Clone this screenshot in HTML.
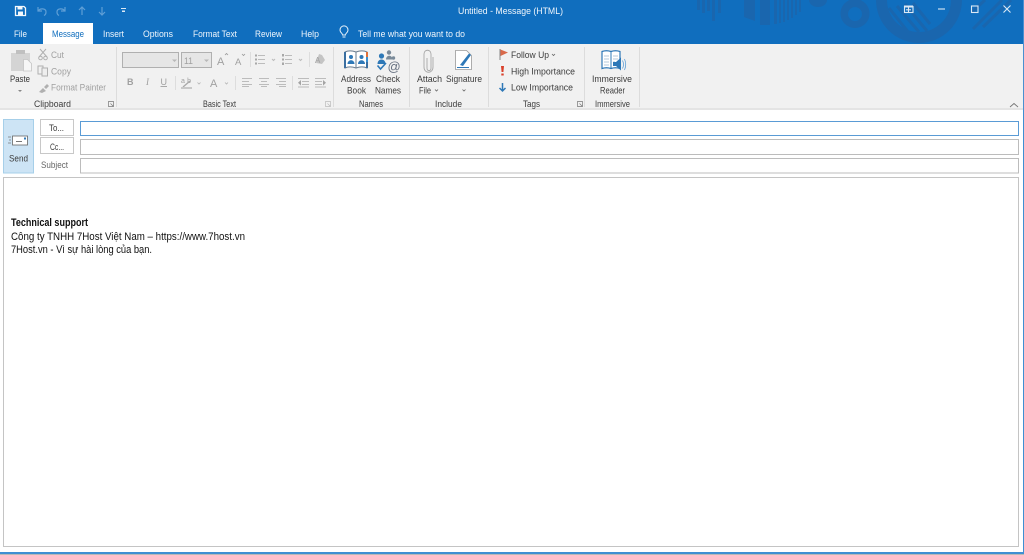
<!DOCTYPE html>
<html><head><meta charset="utf-8"><style>
html,body{margin:0;padding:0;background:#fff;width:1024px;height:555px;overflow:hidden}
svg{display:block;position:absolute;left:0;top:0;filter:blur(.35px)}
text{font-family:"Liberation Sans",sans-serif;font-size:9.6px;fill:#3c3c3c}
.w{fill:#f0f6fc}.d{fill:#a0a0a0}.b{fill:#111;font-size:10.6px}
</style></head><body>
<svg width="1024" height="555" viewBox="0 0 1024 555" xmlns="http://www.w3.org/2000/svg">
<rect width="1024" height="555" fill="#fff"/>
<rect width="1024" height="44" fill="#106ebe"/>
<!-- title pattern -->
<g fill="#1a66ae">
<rect x="697" y="0" width="3" height="10"/><rect x="702" y="0" width="3" height="13"/><rect x="707" y="0" width="3" height="11"/><rect x="712" y="0" width="3" height="21"/><rect x="718" y="0" width="3" height="13"/>
<path d="M744 0h11v21l-11-4z"/><rect x="760" y="0" width="10" height="25"/>
<path d="M774 0h3v24h-3zM779 0h2v23h-2zM783 0h2v22h-2zM787 0h2v20h-2zM791 0h2v18h-2zM795 0h2v15h-2zM799 0h2v12h-2z"/>
<path d="M809 0a9 7 0 0 0 18 0z"/>
<path fill-rule="evenodd" d="M855 -1a14.500 14.500 0 1 0 .01 0zM855 7a7 7 0 1 1-.01 0z"/>
<path fill-rule="evenodd" d="M876 0a43 43 0 0 0 86 0h-11a32 32 0 0 1-64 0z"/>
</g>
<g stroke="#1a66ae" stroke-width="3" fill="none">
<path d="M889 8l20 25M897 6l22 26M905 4l22 27M913 3l17 21"/>
<path d="M1002 0l-29 29M1011 0l-28 27M985 0l-13 12"/>
</g>
<!-- qat -->
<path d="M15.500 6.500h8.500l1.500 1.500v7.500h-10z" fill="none" stroke="#f4f8fc" stroke-width="1.300"/>
<rect x="17.500" y="6.500" width="5" height="3" fill="#f4f8fc"/><rect x="18" y="11.500" width="5" height="3.500" fill="#f4f8fc"/>
<g fill="none" stroke="#5f9fd6" stroke-width="1.200">
<path d="M38 7v4h4M38 11c2-3 8-3 8 1 0 2-1 3-2 3.500"/>
<path d="M65 7v4h-4M65 11c-2-3-8-3-8 1 0 2 1 3 2 3.500"/>
<path d="M82 15V7M79 10l3-3 3 3"/>
<path d="M102 7v8M99 12l3 3 3-3"/>
</g>
<path d="M121 8h5v1h-5zM122 10.500h3v1.500h-3z" fill="#dce9f5"/>
<text class="w" x="458" y="14" textLength="105" lengthAdjust="spacingAndGlyphs">Untitled  -  Message (HTML)</text>
<!-- window controls -->
<g fill="none" stroke="#dce9f5" stroke-width="1.100">
<rect x="904.500" y="6.500" width="8.500" height="6"/><path d="M904 6.500h9" stroke-width="2"/><path d="M908.500 7v5.500M906 9.800h5"/>
<path d="M938 9h7"/><rect x="971.500" y="6" width="6.500" height="6.500"/>
<path d="M1003.500 5.500l7 7M1010.500 5.500l-7 7"/>
</g>
<!-- tabs -->
<rect x="0" y="44" width="1024" height="64" fill="#f1f1f1"/>
<rect x="43" y="23" width="50" height="21" fill="#fff"/>
<rect x="0" y="108" width="1024" height="2" fill="#e4e4e4"/>
<rect x="1023" y="0" width="1" height="110" fill="#4a90d0"/>
<text class="w" x="14" y="37" textLength="13" lengthAdjust="spacingAndGlyphs">File</text>
<text x="52" y="37" textLength="32" lengthAdjust="spacingAndGlyphs" style="fill:#106ebe">Message</text>
<text class="w" x="103" y="37" textLength="21" lengthAdjust="spacingAndGlyphs">Insert</text>
<text class="w" x="143" y="37" textLength="30" lengthAdjust="spacingAndGlyphs">Options</text>
<text class="w" x="193" y="37" textLength="44" lengthAdjust="spacingAndGlyphs">Format Text</text>
<text class="w" x="255" y="37" textLength="27" lengthAdjust="spacingAndGlyphs">Review</text>
<text class="w" x="301" y="37" textLength="18" lengthAdjust="spacingAndGlyphs">Help</text>
<text class="w" x="358" y="37" textLength="107" lengthAdjust="spacingAndGlyphs">Tell me what you want to do</text>
<path d="M341.500 33a4 4 0 1 1 5 0c-.7.6-1 1.200-1 2h-3c0-.8-.3-1.400-1-2zM342.500 37h3" fill="none" stroke="#e8f2fb" stroke-width="1"/>
<!-- separators -->
<g fill="#dcdcdc"><rect x="116" y="47" width="1" height="60"/><rect x="333" y="47" width="1" height="60"/><rect x="409" y="47" width="1" height="60"/><rect x="488" y="47" width="1" height="60"/><rect x="584" y="47" width="1" height="60"/><rect x="639" y="47" width="1" height="60"/></g>
<!-- clipboard -->
<rect x="11" y="53" width="19" height="18" fill="#d4d4d4"/><rect x="16" y="50" width="9" height="4" fill="#c0c0c0"/>
<path d="M23.500 59.500h4l4 4v7.500h-8z" fill="#f6f6f6" stroke="#c4c4c4" stroke-width=".8"/>
<text x="10" y="82" textLength="20" lengthAdjust="spacingAndGlyphs" style="fill:#333">Paste</text>
<path d="M18 90h4l-2 2z" fill="#888"/>
<g fill="none" stroke="#b0b0b0" stroke-width="1"><path d="M40 49l7 8M46 49l-7 8"/><circle cx="40.500" cy="58" r="1.800"/><circle cx="45.500" cy="58" r="1.800"/>
<rect x="38" y="66" width="5" height="8"/><rect x="42" y="68" width="5.500" height="8" fill="#eee"/></g>
<path d="M39 92l4-4 3 3-4 2zM44 87l3-3 2 2-3 3z" fill="#b0b0b0"/>
<text class="d" x="51" y="58" textLength="13" lengthAdjust="spacingAndGlyphs">Cut</text>
<text class="d" x="51" y="74.500" textLength="20" lengthAdjust="spacingAndGlyphs">Copy</text>
<text class="d" x="51" y="90.500" textLength="55" lengthAdjust="spacingAndGlyphs">Format Painter</text>
<text x="34" y="107" textLength="37" lengthAdjust="spacingAndGlyphs">Clipboard</text>
<path d="M108.500 101.500h5v5h-5zM110.500 103.500l3 3m0-2v2h-2" fill="none" stroke="#777" stroke-width=".7"/>
<!-- basic text -->
<rect x="122.500" y="52.500" width="56" height="15" fill="#e6e6e6" stroke="#b0b0b0"/>
<rect x="181.500" y="52.500" width="30" height="15" fill="#e6e6e6" stroke="#b0b0b0"/>
<path d="M172 59.500h5l-2.500 2.500zM204 59.500h5l-2.500 2.500z" fill="#b8b8b8"/>
<text class="d" x="184" y="64" textLength="9" lengthAdjust="spacingAndGlyphs">11</text>
<text class="d" x="217" y="65" style="font-size:11px">A</text><text class="d" x="235" y="65" style="font-size:9.500px">A</text>
<path d="M225 55l1.500-1.500 1.500 1.500M242 54l1.500 1.500 1.500-1.500" fill="none" stroke="#999" stroke-width=".8"/>
<g fill="none" stroke="#bcbcbc" stroke-width="1">
<path d="M258 55.500h7M258 59.500h7M258 63.500h7M285 55.500h7M285 59.500h7M285 63.500h7"/>
<path d="M272 59l1.500 1.500 1.500-1.500M299 59l1.500 1.500 1.500-1.500"/>
</g>
<g fill="#a8a8a8"><rect x="255" y="54.500" width="2" height="2"/><rect x="255" y="58.500" width="2" height="2"/><rect x="255" y="62.500" width="2" height="2"/><rect x="282" y="54" width="2" height="2.500"/><rect x="282" y="58.500" width="2" height="2"/><rect x="282" y="62.500" width="2" height="2.500"/></g>
<rect x="250" y="52" width="1" height="15" fill="#ddd"/><rect x="309" y="52" width="1" height="15" fill="#ddd"/>
<path d="M316 63l3-9 3 1 3 5-3 4z" fill="#c4c4c4"/><text class="d" x="315" y="63" style="font-size:8px">A</text>
<text class="d" x="127" y="85" style="font-weight:bold;font-size:9px">B</text>
<text class="d" x="146" y="85" style="font-style:italic;font-size:9px;font-family:'Liberation Serif',serif">I</text>
<text class="d" x="160.500" y="85" style="font-size:9px;text-decoration:underline">U</text>
<rect x="175" y="76" width="1" height="14" fill="#ddd"/>
<text class="d" x="181" y="83" style="font-size:7px" textLength="10">ab</text><path d="M183 87l7-6" stroke="#aaa" stroke-width="1.400"/><rect x="181" y="87" width="11" height="2" fill="#c8c8c8"/>
<path d="M197.500 82.500l1.500 1.500 1.500-1.500M225 82.500l1.500 1.500 1.500-1.500" fill="none" stroke="#b4b4b4" stroke-width=".8"/>
<text class="d" x="210" y="87" style="font-size:11px">A</text>
<rect x="235" y="76" width="1" height="14" fill="#ddd"/><rect x="292" y="76" width="1" height="14" fill="#ddd"/>
<g fill="none" stroke="#bcbcbc" stroke-width="1">
<path d="M242 78.500h10M242 81.500h7M242 84.500h10M242 86.500h7"/>
<path d="M259 78.500h10M261 81.500h6M259 84.500h10M261 86.500h6"/>
<path d="M276 78.500h10M279 81.500h7M276 84.500h10M279 86.500h7"/>
<path d="M298 78.500h11M302 81.500h7M302 84.500h7M298 87h11"/>
<path d="M315 78.500h11M315 81.500h7M315 84.500h7M315 87h11"/>
</g>
<path d="M301 80l-3 2.800 3 2.800zM323 80l3 2.800-3 2.800z" fill="#a4a4a4"/>
<text x="203" y="107" textLength="33" lengthAdjust="spacingAndGlyphs">Basic Text</text>
<path d="M325.500 101.500h5v5h-5zM327.500 103.500l3 3" fill="none" stroke="#bbb" stroke-width=".7"/>
<!-- names -->
<path d="M345 52c3-1.500 7-1.500 11 0 4-1.500 8-1.500 11 0v16c-3-1.500-7-1.500-11 0-4-1.500-8-1.500-11 0z" fill="#fff" stroke="#6a7d90" stroke-width="1"/>
<rect x="344" y="52" width="2" height="16" fill="#3a6ea0"/><rect x="366" y="52" width="2" height="5" fill="#e0703a"/><rect x="366" y="57" width="2" height="5" fill="#3a8fcf"/><rect x="366" y="62" width="2" height="6" fill="#3a6ea0"/>
<path d="M356 52v16" stroke="#6a7d90"/>
<g fill="#2e78b7"><circle cx="351" cy="57" r="2"/><path d="M347.500 64c0-5 7-5 7 0z"/><circle cx="361.500" cy="57" r="2"/><path d="M358 64c0-5 7-5 7 0z"/></g>
<g fill="#7a8a99"><circle cx="389" cy="52.500" r="2.200"/><path d="M386 59.500c0-5 6.500-5 6.500 0z"/><circle cx="393.500" cy="58" r="1.700"/></g>
<g fill="#2e78b7"><circle cx="381.500" cy="56" r="2.600"/><path d="M377.500 64c0-6 8-6 8 0z"/></g>
<path d="M377.500 65.500l3 3.500 5.500-6" fill="none" stroke="#2e78b7" stroke-width="1.600"/>
<text x="387.500" y="71" style="font-size:13px;fill:#667080">@</text>
<text x="341" y="82" textLength="30" lengthAdjust="spacingAndGlyphs">Address</text>
<text x="347" y="93.500" textLength="19" lengthAdjust="spacingAndGlyphs">Book</text>
<text x="376" y="82" textLength="24" lengthAdjust="spacingAndGlyphs">Check</text>
<text x="375" y="93.500" textLength="26" lengthAdjust="spacingAndGlyphs">Names</text>
<text x="359" y="107" textLength="24" lengthAdjust="spacingAndGlyphs">Names</text>
<!-- include -->
<path d="M427 58v10c0 3.500 4 3.500 4 0V54c0-5-7-5-7 0v13c0 7 9 7 9 0V57" fill="none" stroke="#a8a8a8" stroke-width=".9"/>
<path d="M455.500 50.500h11l5 5v14h-16z" fill="#fff" stroke="#9a9a9a" stroke-width=".8"/>
<path d="M460 65l9-11.500 2 1.500-8 11z" fill="#2e78b7"/><path d="M457 67.500h12" stroke="#2e78b7"/>
<text x="417" y="82" textLength="25" lengthAdjust="spacingAndGlyphs">Attach</text>
<text x="419" y="93.500" textLength="12" lengthAdjust="spacingAndGlyphs">File</text>
<path d="M435 89.500l1.500 1.500 1.500-1.500M462.500 89.500l1.500 1.500 1.500-1.500" fill="none" stroke="#666" stroke-width=".8"/>
<text x="446" y="82" textLength="36" lengthAdjust="spacingAndGlyphs">Signature</text>
<text x="435" y="107" textLength="27" lengthAdjust="spacingAndGlyphs">Include</text>
<!-- tags -->
<path d="M500 49v11" stroke="#888"/><path d="M500.500 49.500l7.500 3-7.500 3.500z" fill="#d9694a"/>
<text x="511" y="58" textLength="38" lengthAdjust="spacingAndGlyphs">Follow Up</text>
<path d="M552 54l1.500 1.500 1.500-1.500" fill="none" stroke="#666" stroke-width=".8"/>
<path d="M501 66h3l-.6 6h-1.800zM501.300 73.500h2.400v2h-2.400z" fill="#d9402a"/>
<text x="511" y="74.500" textLength="64" lengthAdjust="spacingAndGlyphs">High Importance</text>
<path d="M502.500 83v8M499.500 88l3 3 3-3" fill="none" stroke="#2e78b7" stroke-width="1.500"/>
<text x="511" y="90.500" textLength="62" lengthAdjust="spacingAndGlyphs">Low Importance</text>
<text x="523" y="107" textLength="17" lengthAdjust="spacingAndGlyphs">Tags</text>
<path d="M577.500 101.500h5v5h-5zM579.500 103.500l3 3m0-2v2h-2" fill="none" stroke="#777" stroke-width=".7"/>
<!-- immersive -->
<path d="M602 51.500c3-1 6-1 9 0 3-1 6-1 9 0v17c-3-1-6-1-9 0-3-1-6-1-9 0z" fill="#fff" stroke="#2e78b7" stroke-width="1.200"/>
<path d="M611 52v16" stroke="#2e78b7"/><path d="M604 56h5M604 59h5M604 62h5M604 65h5M613 56h5M613 59h5M613 62h2" stroke="#9fb8cf" stroke-width=".8"/>
<path d="M613 62h3l5-4.500v13l-5-4.500h-3z" fill="#2e78b7"/><path d="M622.500 60.500c1.300 2.500 1.300 5.500 0 8M624.500 59c1.500 3.500 1.500 7.500 0 11" fill="none" stroke="#5f9fd6" stroke-width=".8"/>
<text x="592" y="82" textLength="40" lengthAdjust="spacingAndGlyphs">Immersive</text>
<text x="600" y="93.500" textLength="25" lengthAdjust="spacingAndGlyphs">Reader</text>
<text x="595" y="107" textLength="35" lengthAdjust="spacingAndGlyphs">Immersive</text>
<path d="M1010 107l4-3.500 4 3.500" fill="none" stroke="#777" stroke-width=".9"/>
<!-- compose -->
<rect x="3.500" y="119.500" width="30" height="53.500" fill="#cde4f5" stroke="#a6cfe9"/>
<rect x="12.500" y="136" width="15" height="9" fill="#fff" stroke="#666" stroke-width=".8"/>
<rect x="16" y="141" width="6" height="1" fill="#777"/><rect x="24" y="137.500" width="2" height="2" fill="#2e78b7"/>
<path d="M8 137h3M9 140h2M8 143h3" stroke="#777" stroke-width=".8"/>
<text x="9" y="161.500" textLength="19" lengthAdjust="spacingAndGlyphs">Send</text>
<rect x="40.500" y="119.500" width="33" height="16" fill="#fff" stroke="#c8c8c8"/>
<rect x="40.500" y="137.500" width="33" height="16" fill="#fff" stroke="#c8c8c8"/>
<text x="49" y="131" textLength="15" lengthAdjust="spacingAndGlyphs">To...</text>
<text x="50" y="150" textLength="14" lengthAdjust="spacingAndGlyphs">Cc...</text>
<text x="41" y="168" textLength="27" lengthAdjust="spacingAndGlyphs" style="fill:#666">Subject</text>
<rect x="80.500" y="121.500" width="938" height="14" fill="#fff" stroke="#5a9bd5"/>
<rect x="80.500" y="139.500" width="938" height="15" fill="#fff" stroke="#bcbcbc"/>
<rect x="80.500" y="158.500" width="938" height="14.500" fill="#fff" stroke="#bcbcbc"/>
<rect x="3.500" y="177.500" width="1015" height="369" fill="#fff" stroke="#c4c4c4"/>
<text class="b" x="11" y="226" textLength="77" lengthAdjust="spacingAndGlyphs" style="font-weight:bold">Technical support</text>
<text class="b" x="11" y="240" textLength="234" lengthAdjust="spacingAndGlyphs">Công ty TNHH 7Host Việt Nam – https://www.7host.vn</text>
<text class="b" x="11" y="253" textLength="141" lengthAdjust="spacingAndGlyphs">7Host.vn - Vì sự hài lòng của bạn.</text>
<rect x="1023" y="110" width="1" height="444" fill="#3f8fd2"/>
<rect x="0" y="552" width="1024" height="2" fill="#3f8fd2"/>
<rect x="0" y="554" width="1024" height="1" fill="#b8b8b8"/>
</svg>
</body></html>
